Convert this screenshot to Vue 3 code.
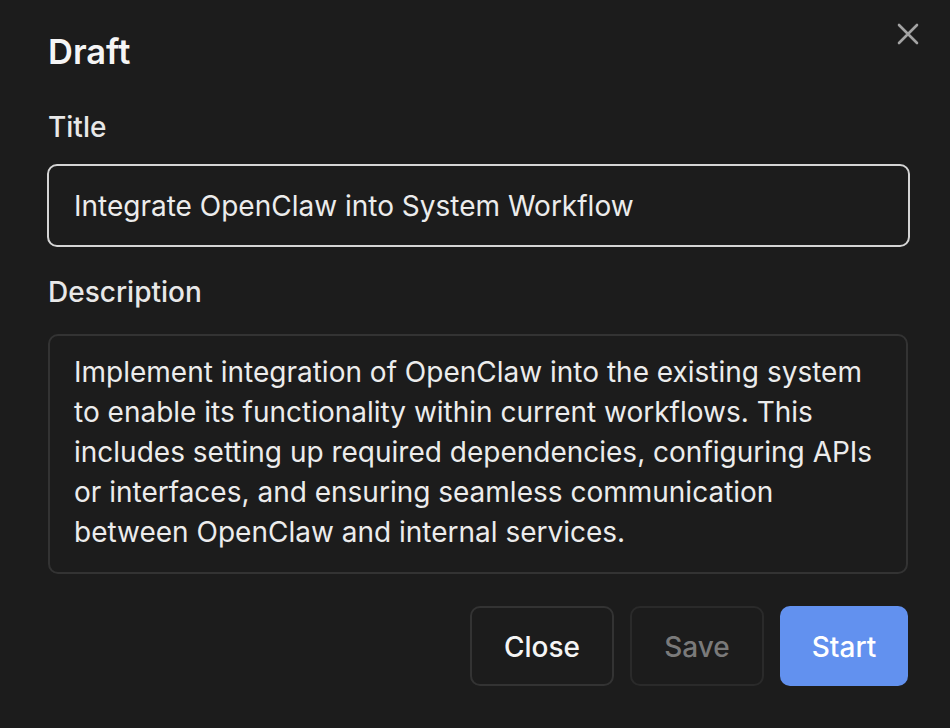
<template>
  <div class="dialog">
    <button class="x" aria-label="Close">
      <svg width="24" height="24" viewBox="0 0 24 24" fill="none" stroke="#a3a3a3" stroke-width="2.6" stroke-linecap="round"><path d="M3 3 21 21M21 3 3 21" /></svg>
    </button>
    <h2 class="heading">Draft</h2>
    <div class="label title-label">Title</div>
    <div class="input">Integrate OpenClaw into System Workflow</div>
    <div class="label desc-label">Description</div>
    <div class="area">Implement integration of OpenClaw into the existing system to enable its functionality within current workflows. This includes setting up required dependencies, configuring APIs or interfaces, and ensuring seamless communication between OpenClaw and internal services.</div>
    <div class="actions">
      <button class="btn close">Close</button>
      <button class="btn save">Save</button>
      <button class="btn start">Start</button>
    </div>
  </div>
</template>

<script setup>
</script>

<style scoped>
.dialog {
  position: relative;
  box-sizing: border-box;
  width: 950px;
  height: 728px;
  padding: 32px 42px 0 48px;
  background: #1c1c1c;
  color: #f5f5f5;
  font-family: Inter, sans-serif;
  overflow: hidden;
}
.x {
  position: absolute;
  top: 22px;
  right: 30px;
  width: 24px;
  height: 24px;
  padding: 0;
  border: 0;
  background: none;
  display: flex;
}
.heading {
  margin: 0;
  font-size: 34.5px;
  line-height: 40px;
  font-weight: 600;
}
.label {
  font-size: 28px;
  line-height: 40px;
  font-weight: 500;
  color: #e8e8e8;
}
.title-label { margin-top: 35px; }
.desc-label { margin-top: 25px; }
.input {
  box-sizing: border-box;
  height: 83px;
  margin: 17px -2px 0 -1px;
  padding: 1px 25px 0;
  border: 2px solid #d4d4d4;
  border-radius: 10px;
  font-size: 28px;
  line-height: 79px;
  color: #ececec;
}
.area {
  box-sizing: border-box;
  height: 240px;
  margin-top: 22px;
  padding: 16px 24px;
  border: 2px solid #333333;
  border-radius: 10px;
  font-size: 28px;
  line-height: 40px;
  color: #ececec;
}
.actions {
  display: flex;
  justify-content: flex-end;
  gap: 16px;
  margin-top: 32px;
}
.btn {
  box-sizing: border-box;
  height: 80px;
  border-radius: 10px;
  border: 2px solid #333333;
  background: transparent;
  color: #f5f5f5;
  font-family: Inter, sans-serif;
  font-size: 28px;
  font-weight: 500;
  padding: 2px 0 0;
}
.close { width: 144px; }
.save { width: 134px; color: #7a7a7a; border-color: #2a2a2a; }
.start { width: 128px; background: #6291ef; border: 0; color: #fff; }
</style>
